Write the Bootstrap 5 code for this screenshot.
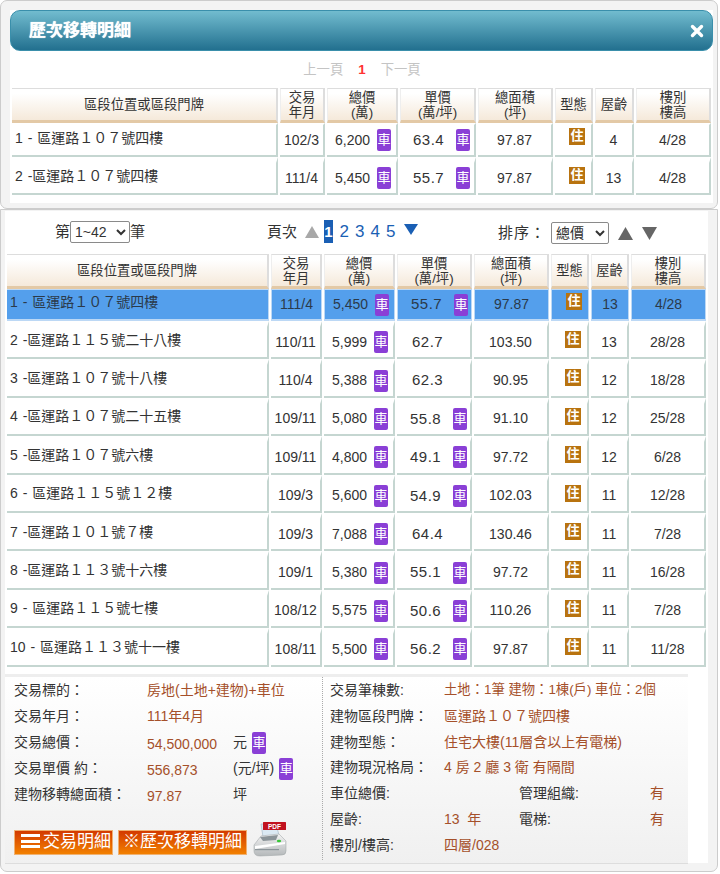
<!DOCTYPE html>
<html lang="zh-Hant">
<head>
<meta charset="utf-8">
<title>歷次移轉明細</title>
<link rel="stylesheet" href="https://cdn.jsdelivr.net/npm/bootstrap@5.3.0/dist/css/bootstrap.min.css">
<style>
html,body{margin:0;padding:0;background:#fff;overflow:hidden}
body{width:720px;height:874px;font-family:"Liberation Sans","Noto Sans CJK TC",sans-serif;font-size:14px;color:#333}
.dlg-a,.dlg-b{width:718px;background:#f3f3f3;border:1px solid #ccc;border-radius:7px}
.dlg-a{height:209px;padding:7px 4px 7px 9px;border-top-width:1px}
.dlg-b{height:663px;border-top-left-radius:0;border-top-right-radius:0;padding:1px 9px 8px 4px;margin-top:0}
.pane{background:#fff;height:100%}
.title-bar{height:41px;margin-top:2px;padding:0 8px 0 18px;border:1px solid #3a8fab;border-radius:10px;background:linear-gradient(#72bccf,#22708f);color:#fff}
.title-txt{font-size:17px;font-weight:700;text-shadow:0 0 1px #fff}
.pager-a{height:37px;font-size:13.33px;color:#c4c4c4;gap:15px;padding:0 0 0 1px}
.pager-a b{color:#f33;font-size:13.33px}
.xfer.table{table-layout:fixed;border-collapse:separate;border-spacing:2px 0;margin:0;font-size:14px;color:#333;--bs-table-bg:transparent}
.xfer-a.table,.xfer-b.table{width:703px}
.xfer.table>:not(caption)>*>*{padding:0;text-align:center;vertical-align:middle;box-shadow:none;background-clip:padding-box}
.xfer.table>thead>tr>th{height:35px;font-size:13.33px;font-weight:400;line-height:15px;color:#333;border:solid #ddd;border-width:1px 2px 3px 1px;border-bottom-color:#e3c9a6;border-left-color:#eee;background:linear-gradient(#fff 15%,#f5e9da)}
.xfer.table>thead>tr>th:first-child{border-left:0}
.xfer.table>tbody>tr>td{border:solid #c5d6d1;border-width:6px 2px 2px 0;border-top-color:transparent}
.xfer-a.table>tbody>tr>td{height:38px}
.xfer-b.table>tbody>tr>td{height:38.4px}
.xfer.table>tbody>tr:first-child>td{border-top-width:2px;height:33.5px}
.xfer-a.table>tbody>tr:first-child>td{height:34px}
.xfer.table>tbody>tr>td.addr{text-align:left;padding:0 0 4px 3px;word-spacing:1px}
.xfer.table>tbody>tr.pick>td{background-color:#549fec;border-color:#bcd8f5;border-width:1px 1px 2px 1px;border-top-color:#bcd8f5;color:#2b3a4a;height:32px}
.xfer.table>tbody>tr.pick>td:first-child{border-left:0}
.xfer.table>tbody>tr>td.lift{vertical-align:top;padding-top:4px}
.xfer.table>tbody>tr:first-child>td.lift{padding-top:3px}
.pair{gap:7px;padding-left:3px}
.ppair{padding-left:13px;gap:12px}
.num{font-size:15px;letter-spacing:.5px;width:31px;text-align:left}
.ppair.solo{padding-left:15px}
.car{display:inline-block;width:14px;height:22px;line-height:21px;background:#8a3fd6;color:#fff;border-radius:2px;font-size:13px;text-align:center;overflow:hidden}
.use{display:block;margin-left:14px;width:16px;height:17px;line-height:16px;background:#b8730f;color:#fff;font-size:13px;font-weight:700;text-align:center}
.tools{height:43px;padding:8px 0 0 2px;font-size:15px}
.box-sel{height:22px;padding:0;font-size:14px;border:1px solid #8a8a8a;border-radius:2px;background:#fff;color:#333;font-family:inherit}
.pg-link{font-size:17px;color:#1a5fb4;text-decoration:none;padding:0 3.5px 0 2.5px}
.pg-on{background:#1a5fb4;color:#fff;line-height:23px;padding:0;width:9px;text-align:center;font-size:15px;font-weight:700}
.info{margin:7px 20px 0 0;height:190px;border-top:3px solid #eee;border-bottom:1px solid #ddd;background:linear-gradient(#fff,#f0f0f0)}
.info-l{width:317px;padding:1px 0 0 9px}
.info-r{padding:1px 0 0 7px;border-left:1px dotted #aaa;height:183px;flex:1}
.line{height:26px;align-items:center}
.line-r{height:25.8px;align-items:center}
.lab{width:133px}
.lab-r{width:114px}
.val{color:#a5502a}
.val-s{font-size:13.33px}
.val-l{width:86px;padding-top:3px}
.unit{gap:5px}
.acts{margin-top:13px;gap:5px;align-items:flex-end}
.act{height:25px;padding:0 2px;border:1px solid #f0b070;border-radius:0;color:#fff;font-size:17px;line-height:22px;background:linear-gradient(#d33a00,#f28000);white-space:nowrap}
.act:hover{color:#fff}
.act-a{width:99px}
.act-b{width:129px}
.bars{display:inline-block;width:19px;height:14px;margin:0 3px 0 4px;vertical-align:-1px;background:linear-gradient(#fff 0 3px,transparent 3px 5.5px,#fff 5.5px 8.5px,transparent 8.5px 11px,#fff 11px)}
.pdf-ic{margin-bottom:-2px}
.tri{display:block}
</style>
</head>
<body>
<div class="dlg-a">
  <div class="pane">
    <div class="title-bar d-flex align-items-center justify-content-between">
      <span class="title-txt">歷次移轉明細</span>
      <svg width="14" height="14" viewBox="0 0 14 14"><path d="M2.5 2.5 L11.5 11.5 M11.5 2.5 L2.5 11.5" stroke="#fff" stroke-width="3.4" stroke-linecap="round"/></svg>
    </div>
    <div class="pager-a d-flex justify-content-center align-items-center">
      <span>上一頁</span><b>1</b><span>下一頁</span>
    </div>
    <table class="table xfer xfer-a">
      <colgroup><col style="width:266px"><col style="width:45px"><col style="width:71px"><col style="width:76px"><col style="width:75px"><col style="width:38px"><col style="width:39px"><col style="width:75px"></colgroup>
      <thead><tr><th>區段位置或區段門牌</th><th>交易<br>年月</th><th>總價<br>(萬)</th><th>單價<br>(萬/坪)</th><th>總面積<br>(坪)</th><th>型態</th><th>屋齡</th><th>樓別<br>樓高</th></tr></thead>
      <tbody>
        <tr><td class="addr">1 - 區運路１０７號四樓</td><td>102/3</td><td><div class="d-flex pair justify-content-center align-items-center">6,200<span class="car">車</span></div></td><td><div class="d-flex ppair align-items-center"><span class="num">63.4</span><span class="car">車</span></div></td><td>97.87</td><td class="lift"><span class="use">住</span></td><td>4</td><td>4/28</td></tr>
        <tr><td class="addr">2 -區運路１０７號四樓</td><td>111/4</td><td><div class="d-flex pair justify-content-center align-items-center">5,450<span class="car">車</span></div></td><td><div class="d-flex ppair align-items-center"><span class="num">55.7</span><span class="car">車</span></div></td><td>97.87</td><td class="lift"><span class="use">住</span></td><td>13</td><td>4/28</td></tr>
      </tbody>
    </table>
  </div>
</div>
<div class="dlg-b">
  <div class="pane">
    <div class="tools d-flex align-items-start">
      <div class="d-flex align-items-center" style="margin-left:48px;width:212px;padding-top:2px"><span>第</span><select class="box-sel ms-0" style="width:60px"><option>1~42</option></select><span>筆</span></div>
      <div class="d-flex align-items-center" style="width:231px">
        <span>頁次</span>
        <svg class="tri" width="16" height="14" viewBox="0 0 16 14" style="margin:0 4px 0 7px"><polygon points="8,1 15,13 1,13" fill="#a8a8a8"/></svg>
        <a class="pg-link pg-on" href="#">1</a><a class="pg-link ms-1" href="#">2</a><a class="pg-link" href="#">3</a><a class="pg-link" href="#">4</a><a class="pg-link" href="#">5</a>
        <svg class="tri" width="14" height="13" viewBox="0 0 14 13" style="margin:-4px 0 0 5px"><polygon points="0,1 14,1 7,12" fill="#1a5fb4"/></svg>
      </div>
      <div class="d-flex align-items-center" style="padding-top:3px">
        <span style="width:53px;letter-spacing:1px">排序：</span><select class="box-sel" style="width:58px"><option>總價</option></select>
        <svg class="tri" width="15" height="14" viewBox="0 0 15 14" style="margin:0 9px"><polygon points="7.5,1 15,14 0,14" fill="#666"/></svg>
        <svg class="tri" width="15" height="14" viewBox="0 0 15 14"><polygon points="0,1 15,1 7.5,14" fill="#666"/></svg>
      </div>
    </div>
    <table class="table xfer xfer-b">
      <colgroup><col style="width:262px"><col style="width:51px"><col style="width:71px"><col style="width:75px"><col style="width:75px"><col style="width:38px"><col style="width:38px"><col style="width:75px"></colgroup>
      <thead><tr><th>區段位置或區段門牌</th><th>交易<br>年月</th><th>總價<br>(萬)</th><th>單價<br>(萬/坪)</th><th>總面積<br>(坪)</th><th>型態</th><th>屋齡</th><th>樓別<br>樓高</th></tr></thead>
      <tbody>
        <tr class="pick"><td class="addr">1 - 區運路１０７號四樓</td><td>111/4</td><td><div class="d-flex pair justify-content-center align-items-center">5,450<span class="car">車</span></div></td><td><div class="d-flex ppair align-items-center"><span class="num">55.7</span><span class="car">車</span></div></td><td>97.87</td><td class="lift"><span class="use">住</span></td><td>13</td><td>4/28</td></tr>
        <tr><td class="addr">2 -區運路１１５號二十八樓</td><td>110/11</td><td><div class="d-flex pair justify-content-center align-items-center">5,999<span class="car">車</span></div></td><td><div class="d-flex ppair solo align-items-center"><span class="num">62.7</span></div></td><td>103.50</td><td class="lift"><span class="use">住</span></td><td>13</td><td>28/28</td></tr>
        <tr><td class="addr">3 -區運路１０７號十八樓</td><td>110/4</td><td><div class="d-flex pair justify-content-center align-items-center">5,388<span class="car">車</span></div></td><td><div class="d-flex ppair solo align-items-center"><span class="num">62.3</span></div></td><td>90.95</td><td class="lift"><span class="use">住</span></td><td>12</td><td>18/28</td></tr>
        <tr><td class="addr">4 -區運路１０７號二十五樓</td><td>109/11</td><td><div class="d-flex pair justify-content-center align-items-center">5,080<span class="car">車</span></div></td><td><div class="d-flex ppair align-items-center"><span class="num">55.8</span><span class="car">車</span></div></td><td>91.10</td><td class="lift"><span class="use">住</span></td><td>12</td><td>25/28</td></tr>
        <tr><td class="addr">5 -區運路１０７號六樓</td><td>109/11</td><td><div class="d-flex pair justify-content-center align-items-center">4,800<span class="car">車</span></div></td><td><div class="d-flex ppair align-items-center"><span class="num">49.1</span><span class="car">車</span></div></td><td>97.72</td><td class="lift"><span class="use">住</span></td><td>12</td><td>6/28</td></tr>
        <tr><td class="addr">6 - 區運路１１５號１２樓</td><td>109/3</td><td><div class="d-flex pair justify-content-center align-items-center">5,600<span class="car">車</span></div></td><td><div class="d-flex ppair align-items-center"><span class="num">54.9</span><span class="car">車</span></div></td><td>102.03</td><td class="lift"><span class="use">住</span></td><td>11</td><td>12/28</td></tr>
        <tr><td class="addr">7 -區運路１０１號７樓</td><td>109/3</td><td><div class="d-flex pair justify-content-center align-items-center">7,088<span class="car">車</span></div></td><td><div class="d-flex ppair solo align-items-center"><span class="num">64.4</span></div></td><td>130.46</td><td class="lift"><span class="use">住</span></td><td>11</td><td>7/28</td></tr>
        <tr><td class="addr">8 -區運路１１３號十六樓</td><td>109/1</td><td><div class="d-flex pair justify-content-center align-items-center">5,380<span class="car">車</span></div></td><td><div class="d-flex ppair align-items-center"><span class="num">55.1</span><span class="car">車</span></div></td><td>97.72</td><td class="lift"><span class="use">住</span></td><td>11</td><td>16/28</td></tr>
        <tr><td class="addr">9 - 區運路１１５號七樓</td><td>108/12</td><td><div class="d-flex pair justify-content-center align-items-center">5,575<span class="car">車</span></div></td><td><div class="d-flex ppair align-items-center"><span class="num">50.6</span><span class="car">車</span></div></td><td>110.26</td><td class="lift"><span class="use">住</span></td><td>11</td><td>7/28</td></tr>
        <tr><td class="addr">10 - 區運路１１３號十一樓</td><td>108/11</td><td><div class="d-flex pair justify-content-center align-items-center">5,500<span class="car">車</span></div></td><td><div class="d-flex ppair align-items-center"><span class="num">56.2</span><span class="car">車</span></div></td><td>97.87</td><td class="lift"><span class="use">住</span></td><td>11</td><td>11/28</td></tr>
      </tbody>
    </table>
    <div class="info d-flex">
      <div class="info-l">
        <div class="d-flex line"><span class="lab">交易標的：</span><span class="val">房地(土地+建物)+車位</span></div>
        <div class="d-flex line"><span class="lab">交易年月：</span><span class="val">111年4月</span></div>
        <div class="d-flex line"><span class="lab">交易總價：</span><span class="val val-l">54,500,000</span><span class="d-flex unit align-items-center">元<span class="car">車</span></span></div>
        <div class="d-flex line"><span class="lab">交易單價 約：</span><span class="val val-l">556,873</span><span class="d-flex unit align-items-center">(元/坪)<span class="car">車</span></span></div>
        <div class="d-flex line"><span class="lab">建物移轉總面積：</span><span class="val val-l">97.87</span><span>坪</span></div>
        <div class="d-flex acts">
          <a class="btn act act-a" href="#"><span class="bars"></span>交易明細</a>
          <a class="btn act act-b" href="#">※歷次移轉明細</a>
          <svg class="pdf-ic" width="36" height="36" viewBox="0 0 36 36">
            <defs><linearGradient id="pb" x1="0" y1="0" x2="0" y2="1"><stop offset="0" stop-color="#f4f4f4"/><stop offset="1" stop-color="#b4b8ba"/></linearGradient></defs>
            <polygon points="9,3 24,3 27,14 11,16" fill="#dbe9f3" stroke="#9fb4c2" stroke-width=".6"/>
            <rect x="11" y="1" width="23" height="8" fill="#c1121f" rx=".5"/>
            <text x="22.5" y="7.6" font-size="6.5" font-weight="700" fill="#fff" text-anchor="middle" font-family="Liberation Sans">PDF</text>
            <path d="M2 24 L9 15 L27 13 L34 20 L34 30 Q34 34 30 34 L8 35 Q2 35 2 30 Z" fill="url(#pb)" stroke="#9aa0a3" stroke-width=".5"/>
            <path d="M8 16 L26 14 L24 19 L11 20 Z" fill="#8b9499"/>
            <path d="M3 25 L33 21 L33 23 L3 28 Z" fill="#fff"/>
            <rect x="3" y="28" width="24" height="1.2" fill="#8b9499"/>
            <ellipse cx="27" cy="20" rx="2.2" ry="1.2" fill="#38c838"/>
          </svg>
        </div>
      </div>
      <div class="info-r">
        <div class="d-flex line-r"><span class="lab-r">交易筆棟數:</span><span class="val val-s">土地：1筆 建物：1棟(戶) 車位：2個</span></div>
        <div class="d-flex line-r"><span class="lab-r">建物區段門牌：</span><span class="val">區運路１０７號四樓</span></div>
        <div class="d-flex line-r"><span class="lab-r">建物型態：</span><span class="val">住宅大樓(11層含以上有電梯)</span></div>
        <div class="d-flex line-r"><span class="lab-r">建物現況格局：</span><span class="val">4 房 2 廳 3 衛 有隔間</span></div>
        <div class="d-flex line-r"><span class="lab-r">車位總價:</span><span class="val" style="width:75px"></span><span style="width:131px">管理組織:</span><span class="val">有</span></div>
        <div class="d-flex line-r"><span class="lab-r">屋齡:</span><span class="val" style="width:75px">13 &nbsp;年</span><span style="width:131px">電梯:</span><span class="val">有</span></div>
        <div class="d-flex line-r"><span class="lab-r">樓別/樓高:</span><span class="val">四層/028</span></div>
      </div>
    </div>
  </div>
</div>
<script src="https://cdn.jsdelivr.net/npm/bootstrap@5.3.0/dist/js/bootstrap.bundle.min.js"></script>
</body>
</html>
